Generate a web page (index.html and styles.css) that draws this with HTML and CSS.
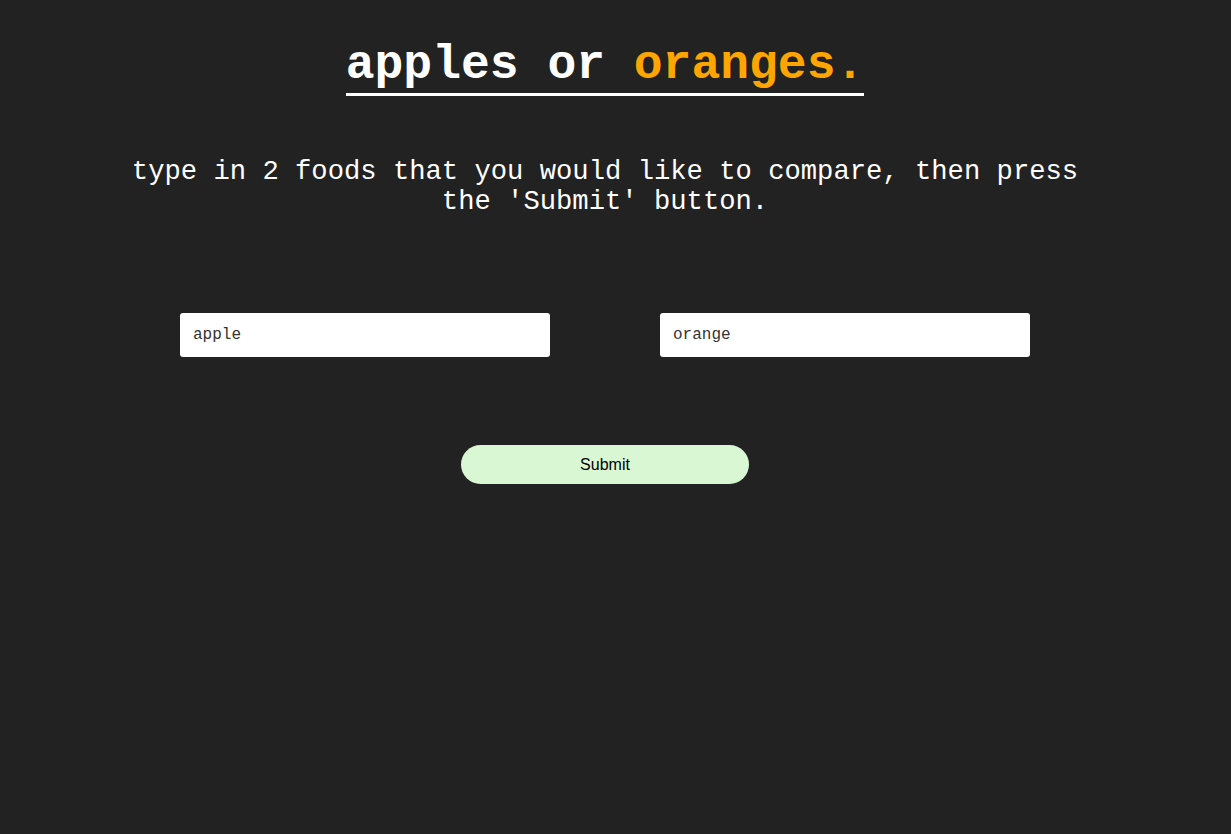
FILE: index.html
```html
<!DOCTYPE html>
<html lang="en">
<head>
<meta charset="utf-8">
<title>apples or oranges.</title>
<link rel="stylesheet" href="styles.css">
</head>
<body>
<main class="page">
  <header class="header">
    <h1 class="title">apples or <span class="accent">oranges.</span></h1>
  </header>
  <p class="lead">type in 2 foods that you would like to compare, then press the 'Submit' button.</p>
  <form class="form">
    <div class="inputs">
      <input class="field" type="text" value="apple">
      <input class="field" type="text" value="orange">
    </div>
    <button class="submit" type="button">Submit</button>
  </form>
</main>
</body>
</html>
```

FILE: styles.css
```css
html, body {
  margin: 0;
  padding: 0;
  background: #222222;
  height: 100%;
}
body {
  font-family: "Liberation Mono", "Courier New", monospace;
  color: #ffffff;
}
.page {
  width: 1210px;
  display: flex;
  flex-direction: column;
  align-items: center;
}
.header {
  padding-top: 38px;
}
.title {
  margin: 0;
  font-size: 48px;
  font-weight: bold;
  line-height: 54px;
  border-bottom: 3px solid #ffffff;
  padding-bottom: 1px;
}
.accent {
  color: #ffa500;
}
.lead {
  margin: 61px 0 0;
  width: 980px;
  text-align: center;
  font-size: 27.2px;
  line-height: 30px;
}
.form {
  margin-top: 96px;
  display: flex;
  flex-direction: column;
  align-items: center;
}
.inputs {
  display: flex;
  gap: 110px;
}
.field {
  box-sizing: border-box;
  width: 370px;
  height: 44px;
  border: none;
  border-radius: 3px;
  padding: 0 13px;
  font-family: "Liberation Mono", "Courier New", monospace;
  font-size: 16px;
  color: #333333;
  background: #ffffff;
  outline: none;
}
.submit {
  margin-top: 88px;
  width: 288px;
  height: 39px;
  border: none;
  border-radius: 20px;
  background: #d9f7d2;
  color: #000000;
  font-family: "Liberation Sans", Arial, sans-serif;
  font-size: 16px;
  padding-top: 2px;
  cursor: pointer;
}
```
